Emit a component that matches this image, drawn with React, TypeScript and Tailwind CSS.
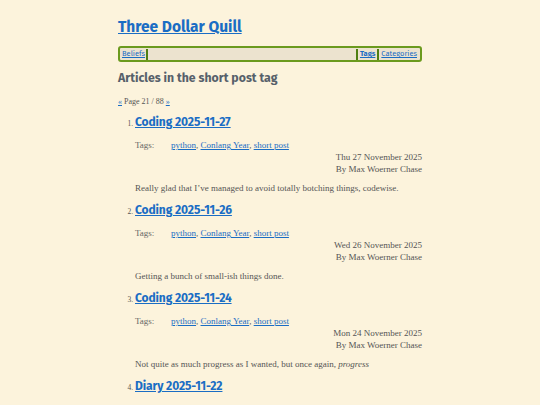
import React from 'react';

interface Post {
  title: string;
  date: string;
  summary: React.ReactNode;
}

const posts: Post[] = [
  {
    title: 'Coding 2025-11-27',
    date: 'Thu 27 November 2025',
    summary: 'Really glad that I\u2019ve managed to avoid totally botching things, codewise.',
  },
  {
    title: 'Coding 2025-11-26',
    date: 'Wed 26 November 2025',
    summary: 'Getting a bunch of small-ish things done.',
  },
  {
    title: 'Coding 2025-11-24',
    date: 'Mon 24 November 2025',
    summary: (
      <>
        Not quite as much progress as I wanted, but once again, <em>progress</em>
      </>
    ),
  },
  {
    title: 'Diary 2025-11-22',
    date: 'Sat 22 November 2025',
    summary: 'More of the same.',
  },
];

const heading = { fontFamily: '"Fira Sans", "Open Sans", "Noto Sans", sans-serif' };
const body = { fontFamily: '"Roboto Slab", "Liberation Serif", serif' };

const PostItem: React.FC<{ post: Post; n: number }> = ({ post, n }) => (
  <li>
    <div className="flex items-baseline leading-[16px]">
      <span className="w-[17px] shrink-0 pr-[2px] text-right text-[7.5px] text-[#555]" style={body}>
        {n}.
      </span>
      <a href="#" className="text-[12px] font-bold text-[#1a6dc4] underline tracking-[-0.1px]" style={heading}>
        {post.title}
      </a>
    </div>
    <div className="pl-[17px]">
      <div className="mt-[7px] flex text-[9px] leading-[12px] text-[#666]" style={body}>
        <span className="w-[36px]">Tags:</span>
        <span>
          <a href="#" className="text-[#1a6dc4] underline">python</a>,{' '}
          <a href="#" className="text-[#1a6dc4] underline">Conlang Year</a>,{' '}
          <a href="#" className="text-[#1a6dc4] underline">short post</a>
        </span>
      </div>
      <div className="text-right text-[9px] leading-[12px] text-[#555]" style={body}>
        <div>{post.date}</div>
        <div>By Max Woerner Chase</div>
      </div>
      <p className="mt-[7px] text-[9px] leading-[12px] text-[#555]" style={body}>
        {post.summary}
      </p>
    </div>
  </li>
);

export default function App() {
  return (
    <div className="h-[405px] overflow-hidden w-full bg-[#fcf3dc]">
      <div className="mx-auto w-[304px] pt-[14px]">
        <a href="#" className="text-[15.5px] font-bold text-[#1a6dc4] underline leading-[24px]" style={heading}>
          Three Dollar Quill
        </a>
        <nav
          className="mt-[7px] flex h-[16px] items-center rounded-[3px] border-2 border-[#6b9a1e] bg-[#ece3cf] px-[1px] text-[7.5px]"
          style={heading}
        >
          <a href="#" className="px-[1px] text-[#1a6dc4] underline">Beliefs</a>
          <span className="h-[11px] w-[2px] bg-[#4f7f12]" />
          <span className="flex-1" />
          <span className="h-[11px] w-[2px] bg-[#4f7f12]" />
          <a href="#" className="px-[2px] font-bold text-[#1a6dc4] underline">Tags</a>
          <span className="h-[11px] w-[2px] bg-[#4f7f12]" />
          <a href="#" className="px-[2px] text-[#1a6dc4] underline">Categories</a>
        </nav>
        <h1 className="mt-[7px] text-[12.3px] font-bold leading-[18px] text-[#56606a]" style={heading}>
          Articles in the short post tag
        </h1>
        <div className="mt-[10px] text-[8px] leading-[10px] text-[#555]" style={body}>
          <a href="#" className="text-[#1a6dc4] underline">«</a> Page 21 / 88{' '}
          <a href="#" className="text-[#1a6dc4] underline">»</a>
        </div>
        <ol className="mt-[7px] flex flex-col gap-[8px]">
          {posts.map((p, i) => (
            <PostItem key={p.title} post={p} n={i + 1} />
          ))}
        </ol>
      </div>
    </div>
  );
}
